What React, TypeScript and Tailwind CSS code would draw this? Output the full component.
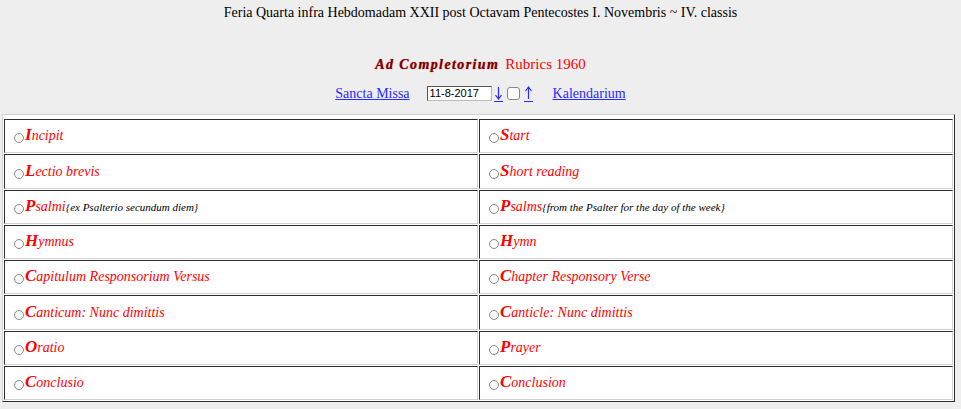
import React from 'react';

type Hour = {
  latin: string;
  english: string;
  latinNote?: string;
  englishNote?: string;
};

const hours: Hour[] = [
  { latin: 'Incipit', english: 'Start' },
  { latin: 'Lectio brevis', english: 'Short reading' },
  {
    latin: 'Psalmi',
    english: 'Psalms',
    latinNote: '{ex Psalterio secundum diem}',
    englishNote: '{from the Psalter for the day of the week}',
  },
  { latin: 'Hymnus', english: 'Hymn' },
  { latin: 'Capitulum Responsorium Versus', english: 'Chapter Responsory Verse' },
  { latin: 'Canticum: Nunc dimittis', english: 'Canticle: Nunc dimittis' },
  { latin: 'Oratio', english: 'Prayer' },
  { latin: 'Conclusio', english: 'Conclusion' },
];

const Arrow = ({ up }: { up?: boolean }) => (
  <svg width="9" height="16" viewBox="0 0 9 16" className="block">
    {up ? (
      <path d="M4.5 1 V13 M1.5 5 L4.5 1 L7.5 5" stroke="#2a2aff" strokeWidth="1.2" fill="none" />
    ) : (
      <path d="M4.5 1 V13 M1.5 9 L4.5 13 L7.5 9" stroke="#2a2aff" strokeWidth="1.2" fill="none" />
    )}
    <path d="M0 15.5 H9" stroke="#2a2aff" strokeWidth="1" />
  </svg>
);

const Cell = ({ text, note }: { text: string; note?: string }) => (
  <div className="h-[34.25px] bg-white border border-t-[#2e2e2e] border-l-[#2e2e2e] border-b-[#d2d2d2] border-r-[#d2d2d2] flex items-center pl-[9px] pb-[2px]">
    <span className="whitespace-nowrap">
      <span className="inline-block w-[10px] h-[10px] rounded-full border-[1.5px] border-[#8a8a8a] bg-[#fafafa] mr-[1px] align-[-3px]" />
      <span className="text-[#ff0000] italic">
        <b className="text-[17px] font-bold">{text[0]}</b>
        <span className="text-[14px]">{text.slice(1)}</span>
      </span>
      {note && <span className="italic text-[11px] text-black">{note}</span>}
    </span>
  </div>
);

export default function App() {
  return (
    <div className="min-h-screen bg-[#eeeeee] text-black font-['Liberation_Serif',serif] pt-[4px]">
      <p className="text-center text-[14px] leading-[18px]">
        Feria Quarta infra Hebdomadam XXII post Octavam Pentecostes I. Novembris ~ IV. classis
      </p>

      <p className="text-center text-[14px] leading-[18px] mt-[33px]">
        <span className="text-[#800000] font-bold italic tracking-[1.4px] [text-shadow:0_0_1px_#b04040]">
          Ad Completorium
        </span>
        <span className="text-[#ff0000] text-[15px] ml-[6px]">Rubrics 1960</span>
      </p>

      <div className="flex items-center justify-center h-[20px] mt-[9px] text-[14px] text-[#2a2aff]">
        <a href="#" className="underline">Sancta Missa</a>
        <input
          type="text"
          defaultValue="11-8-2017"
          className="ml-[17px] w-[65px] h-[15px] bg-white border border-[#555] border-r-[#bbb] border-b-[#bbb] px-[2px] text-[11px] leading-[13px] text-black font-['Liberation_Sans',sans-serif] outline-none"
        />
        <a href="#" className="ml-[2px] mt-[2px]"><Arrow /></a>
        <span className="inline-block w-[13px] h-[13px] rounded-[3px] border border-[#888] bg-white mx-[4px]" />
        <a href="#" className="mt-[2px]"><Arrow up /></a>
        <a href="#" className="underline ml-[20px]">Kalendarium</a>
      </div>

      <div className="ml-[2px] w-[953px] mt-[11px] bg-white border border-t-[#d2d2d2] border-l-[#d2d2d2] border-b-[#2e2e2e] border-r-[#2e2e2e] pt-[4px] px-[1px] pb-[1px] grid grid-cols-2 gap-[1px]">
        {hours.map((h) => (
          <React.Fragment key={h.latin}>
            <Cell text={h.latin} note={h.latinNote} />
            <Cell text={h.english} note={h.englishNote} />
          </React.Fragment>
        ))}
      </div>
    </div>
  );
}
